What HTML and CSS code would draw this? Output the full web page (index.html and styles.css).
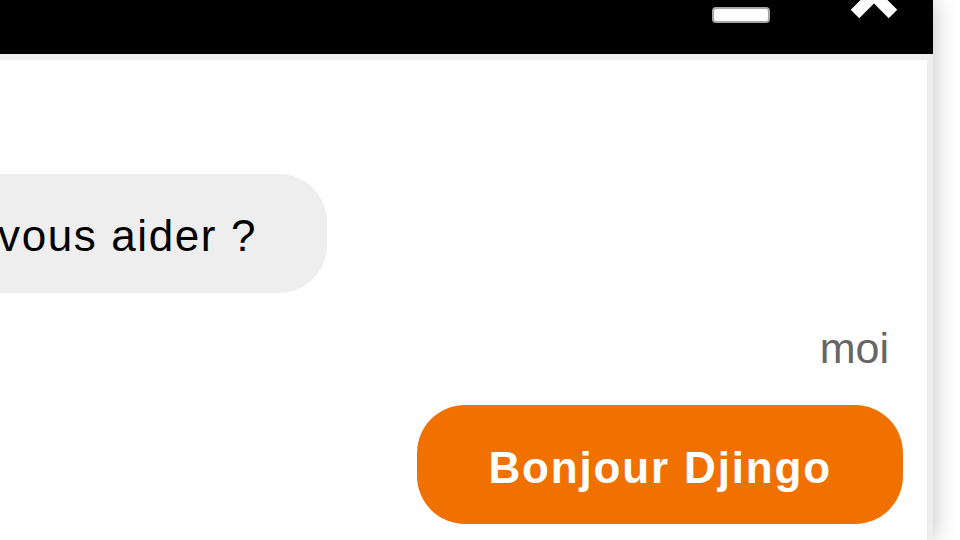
FILE: index.html
```html
<!DOCTYPE html>
<html lang="fr">
<head>
<meta charset="utf-8">
<title>Djingo</title>
<link rel="stylesheet" href="styles.css">
</head>
<body>
<div class="widget">
  <header class="head">
    <span class="btn-min" aria-label="Réduire"></span>
    <svg class="btn-close" width="56" height="56" viewBox="0 0 56 56" aria-label="Fermer">
      <path d="M9 9 L47 47 M47 9 L9 47" stroke="#fff" stroke-width="12" stroke-linecap="butt" fill="none"/>
    </svg>
  </header>
  <div class="frame">
    <div class="panel">
      <div class="row-in">
        <div class="bubble bubble-in">vous aider ?</div>
      </div>
      <div class="author">moi</div>
      <div class="row-out">
        <div class="bubble bubble-out">Bonjour Djingo</div>
      </div>
    </div>
  </div>
</div>
</body>
</html>
```
FILE: styles.css
```css
html, body {
  margin: 0;
  padding: 0;
  background: #ffffff;
  overflow: hidden;
  width: 960px;
  height: 540px;
}

body {
  font-family: "Liberation Sans", Arial, sans-serif;
}

.widget {
  width: 933px;
  height: 540px;
  display: flex;
  flex-direction: column;
  box-shadow: 0 0 22px rgba(0, 0, 0, 0.26);
}

.head {
  height: 54px;
  flex: 0 0 54px;
  background: #000;
  display: flex;
  justify-content: flex-end;
  align-items: flex-start;
  padding-right: 31px;
  gap: 76px;
  overflow: hidden;
}

.btn-min {
  display: block;
  width: 54px;
  height: 12px;
  margin-top: 7px;
  background: #fff;
  border: 2px solid #a6a6a6;
  border-radius: 4px;
}

.btn-close {
  display: block;
  margin-top: -33px;
  flex: 0 0 56px;
}

.frame {
  flex: 1;
  background: #eeeeee;
  padding: 6px 6px 0 0;
  display: flex;
}

.panel {
  flex: 1;
  background: #ffffff;
  display: flex;
  flex-direction: column;
}

.row-in {
  width: 327px;
  margin-top: 114px;
  display: flex;
  justify-content: flex-end;
}

.bubble {
  flex-shrink: 0;
  white-space: nowrap;
  font-size: 44px;
  line-height: 51px;
  border-radius: 48px;
}

.bubble-in {
  background: #eeeeee;
  color: #000;
  letter-spacing: 1.6px;
  padding: 36px 70px 32px 72px;
}

.author {
  margin-top: 31px;
  margin-right: 38px;
  text-align: right;
  font-size: 43px;
  line-height: 48px;
  color: #666666;
}

.row-out {
  margin-top: 33px;
  margin-right: 24px;
  display: flex;
  justify-content: flex-end;
}

.bubble-out {
  background: #f07000;
  color: #ffffff;
  font-weight: bold;
  letter-spacing: 1.85px;
  padding: 37px 71px 31px 71px;
}
```
